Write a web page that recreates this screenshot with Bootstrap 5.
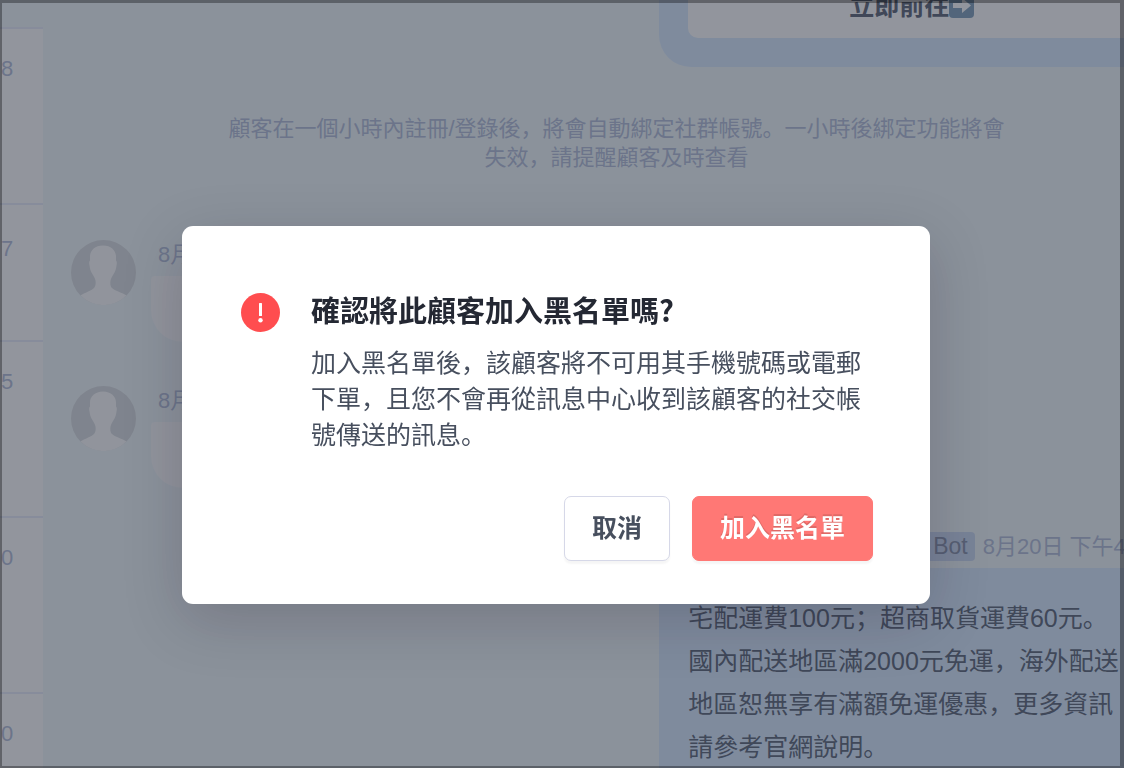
<!DOCTYPE html>
<html lang="zh">
<head>
<meta charset="utf-8">
<meta name="viewport" content="width=device-width, initial-scale=1">
<title>訊息中心</title>
<link href="https://cdn.jsdelivr.net/npm/bootstrap@5.3.0/dist/css/bootstrap.min.css" rel="stylesheet">
<style>
  :root { --ink: #474f5e; --muted: #b2bdd8; --chat: #f1f9fb; --line: #e8edfa; --sky: #d9ebff; }
  body { font-family: "Liberation Sans", "Noto Sans CJK SC", sans-serif; font-size: 25px; line-height: 43px; color: var(--ink); background: var(--chat); }

  /* conversation list */
  .chat-list { width: 43px; background: #fff; }
  .chat-item { height: 176px; padding: 28px 1px 0; border-bottom: 2px solid var(--line); font-size: 22px; line-height: 24px; color: var(--muted); }
  .chat-item.is-active { height: 29px; padding: 0; background: var(--chat); }
  .chat-item.is-short { height: 137px; padding-top: 32px; }

  /* conversation */
  .outgoing { width: 43%; background: var(--sky); white-space: nowrap; }
  .outgoing-card { height: 67px; padding: 0 0 29px 29px; border-bottom-left-radius: 32px; }
  .outgoing-inner { height: 38px; padding-left: 161px; border-bottom-left-radius: 10px; }
  .outgoing-inner a { color: #5a6374; line-height: 36px; margin-top: -12px; }
  .outgoing-text { padding: 29px; color: #5a6476; }
  .notice { margin: 47px 0 68px; padding-left: 66px; font-size: 22px; line-height: 29px; color: var(--muted); }
  .incoming { height: 146px; padding-left: 28px; gap: 15px; }
  .avatar { width: 65px; height: 65px; }
  .stamp { padding-left: 7px; font-size: 22px; line-height: 30px; color: var(--muted); }
  .incoming-bubble { width: 200px; height: 66px; margin-top: 6px; background: #fcfcfd; border-radius: 4px 32px 32px 32px; }
  .meta { width: 43%; height: 36px; padding-left: 264px; gap: 8px; font-size: 22px; line-height: 29px; white-space: nowrap; }
  .bot-tag { padding: 0 7px 0 10px; border-radius: 4px; background: #cbdaf3; color: #8791a9; font-size: 23px; }
  .meta time { color: var(--muted); }

  /* dialog */
  .modal-backdrop { --bs-backdrop-bg: #252b3b; }
  .window-edge { inset: 0; z-index: 1052; pointer-events: none; border: solid rgba(0, 0, 0, .33); border-width: 3px 4px 2px 2px; }
  .modal { padding: 226px 12px 0 0; }
  .modal-dialog { max-width: 748px; margin: 0 auto; }
  .modal-content { padding: 64px 57px 43px 59px; border: 0; border-radius: 11px; color: var(--ink); box-shadow: 0 16px 60px rgba(20, 10, 30, .19); }
  .alert-icon { width: 39px; height: 39px; margin-top: 3px; }
  .dialog-title { font-family: "Noto Sans CJK SC", sans-serif; font-size: 29px; line-height: 39px; margin-bottom: 16px; color: #242833; }
  .dialog-text { line-height: 36px; margin-bottom: 43px; }
  .dialog-copy { padding-left: 31px; }
  .dialog-actions { gap: 22px; }
  .dialog-actions .btn { padding: 10px 27px; font-size: 25px; line-height: 43px; font-weight: 700; border-radius: 7px; box-shadow: 0 3px 2px rgba(0, 0, 0, .04); }
  .btn-plain { --bs-btn-color: var(--ink); --bs-btn-bg: #fff; --bs-btn-border-color: #d6d8e8; }
  .btn-block-user { --bs-btn-color: #fff; --bs-btn-bg: #ff7875; --bs-btn-border-color: #ff7875; text-shadow: 0 -2px 0 rgba(0, 0, 0, .12); }
</style>
</head>
<body class="vh-100 overflow-hidden">

<div class="d-flex h-100 overflow-hidden">
  <aside class="chat-list flex-shrink-0">
    <div class="chat-item is-active"></div>
    <div class="chat-item">8</div>
    <div class="chat-item is-short">7</div>
    <div class="chat-item">5</div>
    <div class="chat-item">0</div>
    <div class="chat-item">0</div>
  </aside>

  <main class="flex-grow-1 d-flex flex-column overflow-hidden">
    <div class="outgoing outgoing-card align-self-end flex-shrink-0">
      <div class="outgoing-inner bg-white overflow-hidden">
        <a href="#" class="d-flex align-items-center fw-bold text-decoration-none">立即前往<svg width="25" height="25" viewBox="0 0 25 25" aria-hidden="true"><rect y="-2" width="25" height="26" rx="4" fill="#7f9fba"/><path d="M4 9h9V4l9 7.500-9 7.500v-5H4z" fill="#fff"/></svg></a>
      </div>
    </div>

    <p class="notice text-center flex-shrink-0">顧客在一個小時內註冊/登錄後，將會自動綁定社群帳號。一小時後綁定功能將會<br>失效，請提醒顧客及時查看</p>

    <svg class="d-none">
      <symbol id="person" viewBox="0 0 65 65">
        <circle cx="32.500" cy="32.500" r="32.500" fill="#d9dde0"/>
        <path d="M32 5.500c-8 0-13 5-13 11v4c-1 1-1 3-.5 5 .4 3 1 5 2 7 1.500 3 3.500 5 4 8 .5 4-.2 6-1.500 7.500C20 51 15 52 9.500 55.500A32.500 32.500 0 0 0 55.500 55.500C50 52 44 51 41 48c-1.500-1.500-2-3.500-1.500-7.500.5-3 2.500-5 4-8 1-2 1.600-4 2-7 .5-2 .5-4-.5-5v-4c0-6-5-11-13-11z" fill="#fdfdfd"/>
      </symbol>
    </svg>
    <div class="incoming d-flex flex-shrink-0">
      <svg class="avatar"><use href="#person"/></svg>
      <div>
        <div class="stamp">8月20日</div>
        <div class="incoming-bubble"></div>
      </div>
    </div>
    <div class="incoming d-flex flex-shrink-0">
      <svg class="avatar"><use href="#person"/></svg>
      <div>
        <div class="stamp">8月20日</div>
        <div class="incoming-bubble"></div>
      </div>
    </div>

    <div class="meta d-flex align-items-start align-self-end flex-shrink-0">
      <span class="bot-tag">Bot</span>
      <time>8月20日 下午4</time>
    </div>
    <div class="outgoing outgoing-text align-self-end flex-grow-1">
      宅配運費100元；超商取貨運費60元。<br>國內配送地區滿2000元免運，海外配送<br>地區恕無享有滿額免運優惠，更多資訊<br>請參考官網說明。
    </div>
  </main>
</div>

<div class="modal-backdrop show"></div>
<div class="window-edge position-fixed"></div>

<div class="modal d-block" role="alertdialog" aria-modal="true" aria-labelledby="dialogTitle" aria-describedby="dialogText">
  <div class="modal-dialog">
    <div class="modal-content">
      <div class="d-flex">
        <svg class="alert-icon flex-shrink-0" viewBox="0 0 39 39" aria-hidden="true">
          <circle cx="19.500" cy="19.500" r="19.500" fill="#ff4d4f"/>
          <rect x="18" y="10" width="3" height="13" rx=".5" fill="#fff"/>
          <circle cx="19.500" cy="27.200" r="2.200" fill="#fff"/>
        </svg>
        <div class="dialog-copy">
          <h1 class="dialog-title fw-bold" id="dialogTitle">確認將此顧客加入黑名單嗎?</h1>
          <p class="dialog-text" id="dialogText">加入黑名單後，該顧客將不可用其手機號碼或電郵下單，且您不會再從訊息中心收到該顧客的社交帳號傳送的訊息。</p>
        </div>
      </div>
      <div class="dialog-actions d-flex justify-content-end">
        <button type="button" class="btn btn-plain">取消</button>
        <button type="button" class="btn btn-block-user">加入黑名單</button>
      </div>
    </div>
  </div>
</div>

<script src="https://cdn.jsdelivr.net/npm/bootstrap@5.3.0/dist/js/bootstrap.bundle.min.js"></script>
</body>
</html>
